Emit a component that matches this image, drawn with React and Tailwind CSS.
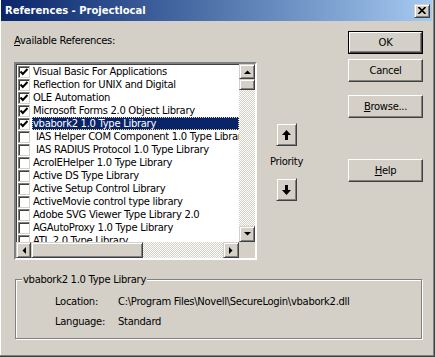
import React from "react"

const refs = [
  { name: "Visual Basic For Applications", checked: true },
  { name: "Reflection for UNIX and Digital", checked: true },
  { name: "OLE Automation", checked: true },
  { name: "Microsoft Forms 2.0 Object Library", checked: true },
  { name: "vbabork2 1.0 Type Library", checked: true, selected: true },
  { name: " IAS Helper COM Component 1.0 Type Library" },
  { name: " IAS RADIUS Protocol 1.0 Type Library" },
  { name: "AcroIEHelper 1.0 Type Library" },
  { name: "Active DS Type Library" },
  { name: "Active Setup Control Library" },
  { name: "ActiveMovie control type library" },
  { name: "Adobe SVG Viewer Type Library 2.0" },
  { name: "AGAutoProxy 1.0 Type Library" },
  { name: "ATL 2.0 Type Library" },
]

const raised =
  "border border-t-[#d4d0c8] border-l-[#d4d0c8] border-r-[#404040] border-b-[#404040] shadow-[inset_1px_1px_0_#ffffff,inset_-1px_-1px_0_#808080] bg-[#d4d0c8]"

const btn =
  "w-[75px] h-[23px] flex items-center justify-center border border-t-white border-l-white border-r-[#404040] border-b-[#404040] shadow-[inset_-1px_-1px_0_#808080] bg-[#d4d0c8] text-black"

const checker =
  "bg-[repeating-conic-gradient(#ffffff_0%_25%,#d4d0c8_0%_50%)] bg-size-[2px_2px]"

const Tri = ({ dir }) => {
  const pts = {
    up: "0,4 7,4 3.5,0.5",
    down: "0,0 7,0 3.5,3.5",
    left: "4,0 4,7 0.5,3.5",
    right: "0,0 0,7 3.5,3.5",
  }[dir]
  const horiz = dir === "left" || dir === "right"
  return (
    <svg width={horiz ? 4 : 7} height={horiz ? 7 : 4} viewBox={horiz ? "0 0 4 7" : "0 0 7 4"}>
      <polygon points={pts} fill="#000" />
    </svg>
  )
}

const BigArrow = ({ down }) => (
  <svg width="9" height="10" viewBox="0 0 9 10" className={down ? "rotate-180" : ""}>
    <polygon points="4.5,0 9,5 6,5 6,10 3,10 3,5 0,5" fill="#000" />
  </svg>
)

const CheckBox = ({ checked }) => (
  <div className="ml-[2px] mt-[1px] w-[12px] h-[12px] shrink-0 bg-white border border-t-[#808080] border-l-[#808080] border-r-[#d4d0c8] border-b-[#d4d0c8] shadow-[inset_1px_1px_0_#404040] flex items-center justify-center">
    {checked && (
      <svg width="10" height="10" viewBox="0 0 10 10">
        <polyline points="1.5,4.5 3.8,7 8.5,2" fill="none" stroke="#000" strokeWidth="1.9" />
      </svg>
    )}
  </div>
)

export default function App() {
  return (
    <div
      className="w-[435px] h-[357px] bg-[#d4d0c8] overflow-hidden shadow-[inset_-1px_-1px_0_#404040,inset_-2px_-2px_0_#808080,inset_1px_0_0_#ffffff] text-[10px] leading-[13px] tracking-[-0.3px] text-black"
      style={{ fontFamily: '"DejaVu Sans", Verdana, sans-serif' }}
    >
      {/* title bar */}
      <div className="ml-[1px] mr-[3px] h-[21px] bg-gradient-to-r from-[#0a246a] to-[#a6caf0] flex items-center pl-[4px] pr-[2px]">
        <span className="text-white font-bold text-[10px] tracking-normal">References - Projectlocal</span>
        <div className={`${raised} ml-auto w-[16px] h-[14px] flex items-center justify-center`}>
          <svg width="8" height="7" viewBox="0 0 8 7">
            <path d="M0.5 0 L7.5 7 M7.5 0 L0.5 7" stroke="#000" strokeWidth="1.6" />
          </svg>
        </div>
      </div>

      <div className="pl-[14px] pt-[10px]">
        <div className="flex">
          {/* left column */}
          <div className="w-[243px]">
            <div className="mt-[3px] h-[13px]">
              <span className="underline">A</span>vailable References:
            </div>
            <div className="mt-[15px] h-[198px] border-2 border-t-[#808080] border-l-[#808080] border-r-white border-b-white">
              <div className="h-full bg-white shadow-[inset_1px_1px_0_#404040] flex flex-col">
                <div className="flex h-[178px]">
                  <div className="flex-1 overflow-hidden whitespace-pre pt-[1px]">
                    {refs.map((r, i) => (
                      <div key={i} className="h-[13px] flex">
                        <CheckBox checked={r.checked} />
                        <div
                          className={
                            r.selected
                              ? "ml-[2px] flex-1 pl-[1px] bg-[#0a246a] text-white outline-1 outline-dotted outline-[#f5db95] -outline-offset-1"
                              : "ml-[2px] flex-1 pl-[1px]"
                          }
                        >
                          {r.name}
                        </div>
                      </div>
                    ))}
                  </div>
                  <div className="w-[16px] flex flex-col">
                    <div className={`${raised} h-[15px] flex items-center justify-center`}>
                      <Tri dir="up" />
                    </div>
                    <div className={`${raised} h-[11px]`} />
                    <div className={`flex-1 ${checker}`} />
                    <div className={`${raised} h-[16px] flex items-center justify-center`}>
                      <Tri dir="down" />
                    </div>
                  </div>
                </div>
                <div className="flex h-[16px]">
                  <div className={`${raised} w-[15px] flex items-center justify-center`}>
                    <Tri dir="left" />
                  </div>
                  <div className={`${raised} w-[112px]`} />
                  <div className={`flex-1 ${checker}`} />
                  <div className={`${raised} w-[16px] flex items-center justify-center`}>
                    <Tri dir="right" />
                  </div>
                  <div className="w-[16px] bg-[#d4d0c8]" />
                </div>
              </div>
            </div>
          </div>

          {/* priority column */}
          <div className="ml-[5px] w-[49px] flex flex-col items-center">
            <div className={`${raised} mt-[92px] w-[21px] h-[23px] flex items-center justify-center`}>
              <BigArrow />
            </div>
            <div className="mt-[9px] h-[13px]">Priority</div>
            <div className={`${raised} mt-[10px] w-[21px] h-[23px] flex items-center justify-center`}>
              <BigArrow down />
            </div>
          </div>

          {/* buttons */}
          <div className="ml-[37px] flex flex-col">
            <div className="w-[75px] h-[23px] border border-black">
              <div className={`${btn} w-full h-full`}>OK</div>
            </div>
            <div className={`${btn} mt-[5px]`}>Cancel</div>
            <div className={`${btn} mt-[13px]`}>
              <span>
                <span className="underline">B</span>rowse...
              </span>
            </div>
            <div className={`${btn} mt-[41px]`}>
              <span>
                <span className="underline">H</span>elp
              </span>
            </div>
          </div>
        </div>

        {/* group box */}
        <div className="relative ml-[1px] mt-[19px] w-[407px] h-[60px] border border-[#808080] shadow-[1px_1px_0_#ffffff,inset_1px_1px_0_#ffffff] pl-[39px] pt-[15px]">
          <div className="absolute left-[6px] -top-[7px] px-[1px] bg-[#d4d0c8]">vbabork2 1.0 Type Library</div>
          <div className="grid grid-cols-[63px_1fr] gap-y-[7px]">
            <div>Location:</div>
            <div>C:\Program Files\Novell\SecureLogin\vbabork2.dll</div>
            <div>Language:</div>
            <div>Standard</div>
          </div>
        </div>
      </div>
    </div>
  )
}
